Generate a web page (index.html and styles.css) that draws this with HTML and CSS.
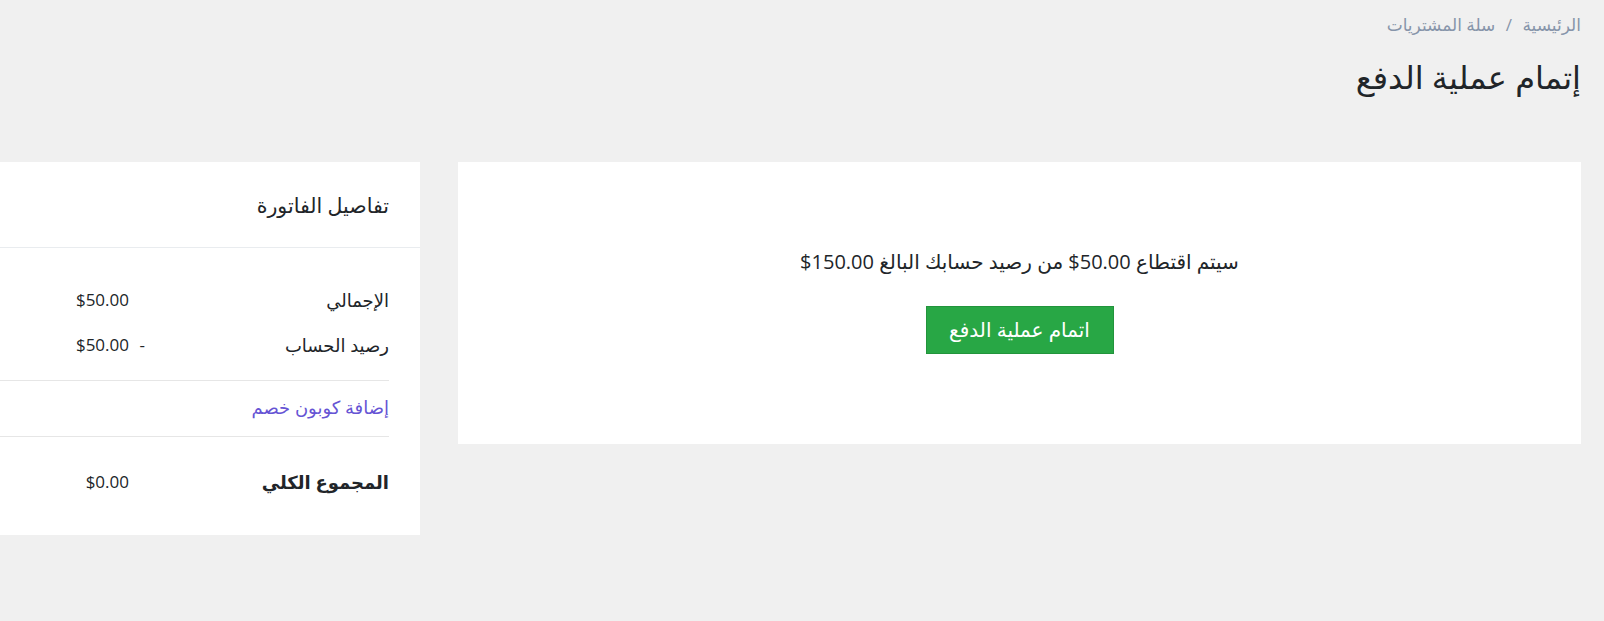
FILE: index.html
```html
<!DOCTYPE html>
<html lang="ar" dir="rtl">
<head>
  <meta charset="UTF-8">
  <meta name="viewport" content="width=device-width, initial-scale=1.0">
  <title>إتمام عملية الدفع</title>
  <link rel="stylesheet" href="styles.css">
</head>
<body>
  <div class="page">
    <nav class="breadcrumb">
      <a href="#">الرئيسية</a>
      <span class="sep">/</span>
      <a href="#">سلة المشتريات</a>
    </nav>
    <h1 class="title">إتمام عملية الدفع</h1>

    <div class="row">
      <div class="card pay-card">
        <p class="pay-msg">سيتم اقتطاع <bdi dir="ltr">$50.00</bdi> من رصيد حسابك البالغ <bdi dir="ltr">$150.00</bdi></p>
        <button class="btn-success">اتمام عملية الدفع</button>
      </div>

      <div class="card invoice">
        <div class="invoice-head">تفاصيل الفاتورة</div>
        <div class="invoice-body">
          <div class="line">
            <span class="label">الإجمالي</span>
            <span class="value"><span class="num">$50.00</span><span class="minus"></span></span>
          </div>
          <div class="line balance">
            <span class="label">رصيد الحساب</span>
            <span class="value"><span class="num">$50.00</span><span class="minus">-</span></span>
          </div>
          <div class="coupon">
            <a href="#">إضافة كوبون خصم</a>
          </div>
          <div class="line total">
            <span class="label">المجموع الكلي</span>
            <span class="value"><span class="num">$0.00</span><span class="minus"></span></span>
          </div>
        </div>
      </div>
    </div>
  </div>
</body>
</html>
```

FILE: styles.css
```css
html, body {
  overflow-x: hidden;
}

body {
  margin: 0;
  font-family: "Open Sans", "DejaVu Sans", sans-serif;
  font-size: 16px;
  color: #212529;
  background-color: #f0f0f0;
}

.page {
  padding: 0 23px;
}

.breadcrumb {
  padding-top: 13px;
  font-size: 17px;
  line-height: 24px;
  color: #8795aa;
}

.breadcrumb a {
  color: #8795aa;
  text-decoration: none;
}

.breadcrumb .sep {
  margin: 0 6px;
}

.title {
  margin: 19px 0 0;
  font-size: 32px;
  font-weight: 400;
  line-height: 42px;
}

.row {
  display: flex;
  margin-top: 64px;
  gap: 38px;
}

.card {
  background-color: #fff;
  flex-shrink: 0;
}

.pay-card {
  width: 1123px;
  height: 282px;
  box-sizing: border-box;
  padding-top: 85px;
  text-align: center;
}

.pay-msg {
  margin: 0 0 29px;
  font-size: 20px;
  line-height: 30px;
}

.btn-success {
  width: 188px;
  height: 48px;
  padding: 0;
  font-family: inherit;
  font-size: 20px;
  line-height: 28px;
  color: #fff;
  background-color: #28a745;
  border: 1px solid #22943c;
  cursor: pointer;
}

.invoice {
  width: 490px;
  height: 373px;
}

.invoice-head {
  padding: 30px 31px 28px;
  font-size: 20.5px;
  line-height: 27px;
  border-bottom: 1px solid #e9ecef;
}

.invoice-body {
  padding: 40px 31px 0;
}

.line {
  display: flex;
  font-size: 18px;
  line-height: 24px;
  margin-bottom: 21px;
}

.line .label {
  width: 244px;
}

.line .value {
  display: flex;
  direction: ltr;
  justify-content: flex-end;
  flex: 1;
  font-size: 17px;
}

.line .minus {
  width: 16px;
  text-align: right;
}

.line.balance {
  margin-bottom: 0;
  padding-bottom: 23px;
}

.coupon {
  padding: 14px 0 17px;
  border-top: 1px solid #e6e6e6;
  border-bottom: 1px solid #e6e6e6;
  font-size: 18px;
  line-height: 24px;
}

.coupon a {
  color: #6654d4;
  text-decoration: none;
}

.total {
  margin-top: 33px;
}

.total .label {
  font-weight: 700;
}
```
